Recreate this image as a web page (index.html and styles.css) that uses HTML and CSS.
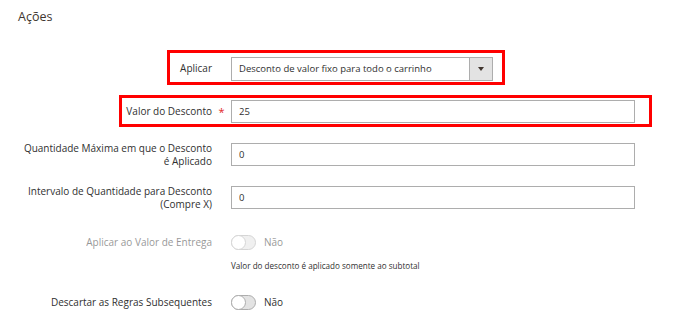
FILE: index.html
```html
<!DOCTYPE html>
<html>
<head>
    <meta charset="utf-8" />
    <title>Ações</title>
    <link rel="stylesheet" href="styles.css">
</head>
<body>
    <div class="section">
        <h2 class="section-title">Ações</h2>

        <div class="field">
            <label class="label">Aplicar</label>
            <span class="req"></span>
            <div class="select">
                <span class="select-text">Desconto de valor fixo para todo o carrinho</span>
                <span class="select-btn"><span class="caret"></span></span>
            </div>
            <div class="mark mark-apply"></div>
        </div>

        <div class="field">
            <label class="label">Valor do Desconto</label>
            <span class="req">*</span>
            <input class="input" type="text" value="25">
            <div class="mark mark-amount"></div>
        </div>

        <div class="field">
            <label class="label">Quantidade Máxima em que o Desconto é Aplicado</label>
            <span class="req"></span>
            <input class="input" type="text" value="0">
        </div>

        <div class="field">
            <label class="label">Intervalo de Quantidade para Desconto (Compre X)</label>
            <span class="req"></span>
            <input class="input" type="text" value="0">
        </div>

        <div class="field field-toggle disabled">
            <label class="label">Aplicar ao Valor de Entrega</label>
            <span class="req"></span>
            <div class="switch">
                <span class="track"><span class="knob"></span></span>
                <span class="switch-text">Não</span>
            </div>
        </div>
        <div class="note">Valor do desconto é aplicado somente ao subtotal</div>

        <div class="field field-last">
            <label class="label">Descartar as Regras Subsequentes</label>
            <span class="req"></span>
            <div class="switch">
                <span class="track"><span class="knob"></span></span>
                <span class="switch-text">Não</span>
            </div>
        </div>
    </div>
</body>
</html>
```

FILE: styles.css
```css
body {
    margin: 0;
    background: #fff;
    font-family: "Open Sans", "Noto Sans", sans-serif;
    color: #303030;
}
.section {
    padding: 8px 0 0 0;
}
.section-title {
    margin: 0 0 0 18px;
    font-size: 12.5px;
    font-weight: 400;
    line-height: 18px;
    color: #41362f;
}
.field {
    position: relative;
    display: grid;
    grid-template-columns: 212px 19px 404px;
    grid-template-rows: 23px;
    align-items: center;
    margin-top: 20px;
}
.field:first-of-type {
    margin-top: 31px;
}
.label {
    box-sizing: border-box;
    padding-left: 20px;
    text-align: right;
    font-size: 10px;
    font-weight: 500;
    line-height: 13px;
    color: #303030;
}
.req {
    color: #e22626;
    font-size: 11px;
    text-align: center;
    line-height: 13px;
}
.input {
    box-sizing: border-box;
    height: 23px;
    width: 404px;
    margin: 0;
    padding: 0 7px;
    border: 1px solid #adadad;
    font-family: inherit;
    font-size: 9.5px;
    color: #303030;
    outline: none;
}
.select {
    box-sizing: border-box;
    display: flex;
    align-items: center;
    width: 262px;
    height: 24px;
    border: 1px solid #adadad;
}
.select-text {
    flex: 1;
    padding-left: 7px;
    font-size: 9.5px;
    white-space: nowrap;
}
.select-btn {
    display: flex;
    align-items: center;
    justify-content: center;
    width: 22px;
    height: 100%;
    background: #e3e3e3;
    border-left: 1px solid #adadad;
}
.caret {
    width: 0;
    height: 0;
    border-left: 3px solid transparent;
    border-right: 3px solid transparent;
    border-top: 4px solid #41362f;
}
.mark {
    position: absolute;
    box-sizing: border-box;
    border: 3px solid #f00;
}
.mark-apply {
    left: 167px;
    top: -7px;
    width: 338px;
    height: 35px;
}
.mark-amount {
    left: 119px;
    top: -5px;
    width: 533px;
    height: 32px;
}
.field-toggle {
    margin-top: 22px;
}
.switch {
    display: flex;
    align-items: center;
    gap: 8px;
}
.track {
    position: relative;
    box-sizing: border-box;
    width: 25px;
    height: 15px;
    border: 1px solid #adadad;
    border-radius: 8px;
    background: #e3e3e3;
}
.knob {
    position: absolute;
    left: -1px;
    top: -1px;
    box-sizing: border-box;
    width: 15px;
    height: 15px;
    border: 1px solid #adadad;
    border-radius: 50%;
    background: #fff;
}
.switch-text {
    font-size: 10px;
    line-height: 13px;
}
.disabled .label,
.disabled .switch {
    opacity: 0.5;
}
.note {
    margin: 6px 0 0 231px;
    font-size: 8.1px;
    line-height: 11px;
    color: #303030;
}
.field-last {
    margin-top: 20px;
}
```
